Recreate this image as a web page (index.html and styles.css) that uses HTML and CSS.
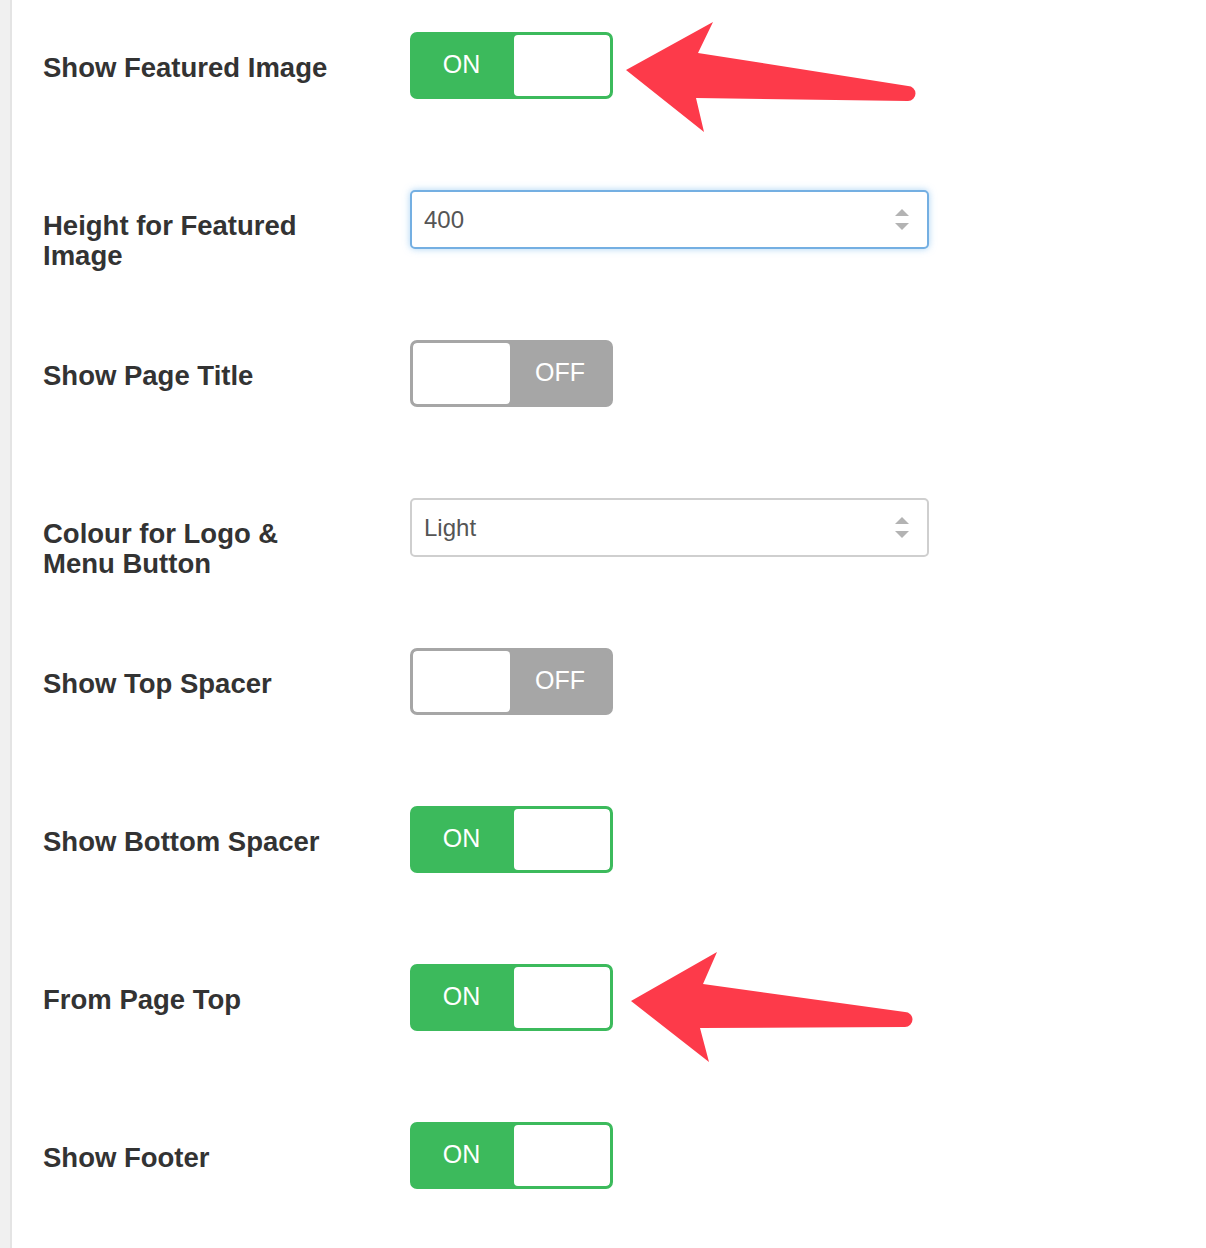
FILE: index.html
```html
<!DOCTYPE html>
<html>
<head>
<meta charset="utf-8">
<link rel="stylesheet" href="styles.css">
</head>
<body>
<div class="page">
  <div class="rail"></div>
  <div class="settings">
    <div class="row">
      <div class="label">Show Featured Image</div>
      <div class="toggle toggle--on"><span class="toggle-text">ON</span><span class="toggle-knob"></span></div>
    </div>
    <div class="row row--field">
      <div class="label">Height for Featured<br>Image</div>
      <div class="field field--focus"><span class="field-value">400</span><span class="spin"><i class="up"></i><i class="down"></i></span></div>
    </div>
    <div class="row">
      <div class="label">Show Page Title</div>
      <div class="toggle toggle--off"><span class="toggle-knob"></span><span class="toggle-text">OFF</span></div>
    </div>
    <div class="row row--field">
      <div class="label">Colour for Logo &amp;<br>Menu Button</div>
      <div class="field"><span class="field-value">Light</span><span class="spin"><i class="up"></i><i class="down"></i></span></div>
    </div>
    <div class="row">
      <div class="label">Show Top Spacer</div>
      <div class="toggle toggle--off"><span class="toggle-knob"></span><span class="toggle-text">OFF</span></div>
    </div>
    <div class="row">
      <div class="label">Show Bottom Spacer</div>
      <div class="toggle toggle--on"><span class="toggle-text">ON</span><span class="toggle-knob"></span></div>
    </div>
    <div class="row">
      <div class="label">From Page Top</div>
      <div class="toggle toggle--on"><span class="toggle-text">ON</span><span class="toggle-knob"></span></div>
    </div>
    <div class="row">
      <div class="label">Show Footer</div>
      <div class="toggle toggle--on"><span class="toggle-text">ON</span><span class="toggle-knob"></span></div>
    </div>
  </div>
  <svg class="arrows" width="1206" height="1248" viewBox="0 0 1206 1248">
    <path d="M626 70 L713 22 L698 53 L908 86 A7.5 7.5 0 0 1 908 101 L696 98 L704 132 Z"/>
    <path d="M631 1001 L717 952 L703 984 L905 1012 A7.5 7.5 0 0 1 905 1027 L700 1028 L709 1062 Z"/>
  </svg>
</div>
</body>
</html>
```

FILE: styles.css
```css
html, body {
  margin: 0;
  padding: 0;
  background: #fff;
}

.page {
  position: relative;
  display: flex;
  min-height: 1248px;
  font-family: "Liberation Sans", Arial, sans-serif;
}

.rail {
  width: 10px;
  background: #f0f0f0;
  border-right: 2px solid #e4e4e4;
  flex: 0 0 auto;
}

.settings {
  padding: 32px 0 0 31px;
  display: flex;
  flex-direction: column;
  gap: 91px;
}

.row {
  display: flex;
  align-items: flex-start;
  height: 67px;
}

.row--field {
  height: 59px;
}

.label {
  width: 367px;
  flex: 0 0 367px;
  padding-top: 21px;
  font-size: 27.5px;
  line-height: 30px;
  font-weight: 700;
  color: #333;
}

.toggle {
  box-sizing: border-box;
  width: 203px;
  height: 67px;
  border: 3px solid;
  border-radius: 7px;
  display: flex;
  overflow: hidden;
}

.toggle--on {
  background: #3cba5c;
  border-color: #3cba5c;
}

.toggle--off {
  background: #a6a6a6;
  border-color: #a6a6a6;
}

.toggle-text {
  flex: 0 0 100px;
  display: flex;
  align-items: center;
  justify-content: center;
  color: #fff;
  font-size: 25px;
  padding-bottom: 2px;
  box-sizing: border-box;
}

.toggle--on .toggle-text {
  flex-basis: 101px;
  padding-right: 4px;
}

.toggle-knob {
  flex: 1;
  background: #fff;
  border-radius: 4px;
}

.field {
  box-sizing: border-box;
  width: 519px;
  height: 59px;
  border: 2px solid #cfcfcf;
  border-radius: 5px;
  display: flex;
  align-items: center;
  padding: 0 18px 0 12px;
  background: #fff;
}

.field--focus {
  border-color: #74afe2;
  box-shadow: 0 0 7px rgba(102, 175, 233, 0.55);
}

.field-value {
  flex: 1;
  font-size: 24px;
  color: #555;
  padding-top: 1px;
}

.spin {
  display: flex;
  flex-direction: column;
  gap: 7px;
}

.spin i {
  display: block;
  width: 0;
  height: 0;
  border-left: 7px solid transparent;
  border-right: 7px solid transparent;
}

.spin .up {
  border-bottom: 7px solid #b3b3b3;
}

.spin .down {
  border-top: 7px solid #b3b3b3;
}

.arrows {
  position: absolute;
  left: 0;
  top: 0;
  pointer-events: none;
}

.arrows path {
  fill: #fd3a4a;
}
```
